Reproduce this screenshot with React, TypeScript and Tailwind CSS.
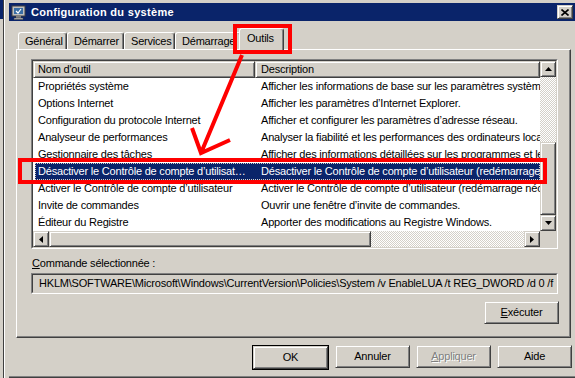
import React from 'react';

// classic 3D edges
const raised =
  'border border-t-[#d4d0c8] border-l-[#d4d0c8] border-r-[#404040] border-b-[#404040] shadow-[inset_1px_1px_#ffffff,inset_-1px_-1px_#808080]';

const tools: [string, string][] = [
  ['Propriétés système', 'Afficher les informations de base sur les paramètres système.'],
  ['Options Internet', 'Afficher les paramètres d’Internet Explorer.'],
  ['Configuration du protocole Internet', 'Afficher et configurer les paramètres d’adresse réseau.'],
  ['Analyseur de performances', 'Analyser la fiabilité et les performances des ordinateurs locaux et distants.'],
  ['Gestionnaire des tâches', 'Afficher des informations détaillées sur les programmes et les processus.'],
  ['Désactiver le Contrôle de compte d’utilisat…', 'Désactiver le Contrôle de compte d’utilisateur (redémarrage nécessaire).'],
  ['Activer le Contrôle de compte d’utilisateur', 'Activer le Contrôle de compte d’utilisateur (redémarrage nécessaire).'],
  ['Invite de commandes', 'Ouvrir une fenêtre d’invite de commandes.'],
  ['Éditeur du Registre', 'Apporter des modifications au Registre Windows.'],
];

const tabs = [
  { label: 'Général', w: 'w-[49px]' },
  { label: 'Démarrer', w: 'w-[57px]' },
  { label: 'Services', w: 'w-[51px]' },
  { label: 'Démarrage', w: 'w-[66px]' },
];

function Arrow({ dir }: { dir: 'up' | 'down' | 'left' | 'right' }) {
  const pts = {
    up: '3.5,0 7,4 0,4',
    down: '0,0 7,0 3.5,4',
    left: '4,0 4,7 0,3.5',
    right: '0,0 4,3.5 0,7',
  }[dir];
  const vertical = dir === 'up' || dir === 'down';
  return (
    <svg width={vertical ? 7 : 4} height={vertical ? 4 : 7} viewBox={vertical ? '0 0 7 4' : '0 0 4 7'}>
      <polygon points={pts} fill="#000" />
    </svg>
  );
}

function ScrollBtn({ dir }: { dir: 'up' | 'down' | 'left' | 'right' }) {
  return (
    <div className={`w-[16px] h-[16px] shrink-0 bg-[#d4d0c8] flex items-center justify-center ${raised}`}>
      <Arrow dir={dir} />
    </div>
  );
}

const hatch = 'bg-[repeating-conic-gradient(#ffffff_0_25%,#d4d0c8_0_50%)] bg-[length:2px_2px]';

function Button({ children, className = '' }: { children: React.ReactNode; className?: string }) {
  return (
    <div className={`w-[75px] h-[23px] bg-[#d4d0c8] flex items-center justify-center ${raised} ${className}`}>
      {children}
    </div>
  );
}

export default function App() {
  return (
    <div className="relative w-[575px] h-[378px] overflow-hidden bg-[#d4d0c8] flex font-['Liberation_Sans',Arial,sans-serif] text-[11px] leading-[13px] tracking-[-0.2px] text-black">
      {/* window behind */}
      <div className="w-[3px] flex flex-col">
        <div className="h-[19px] bg-[#0a246a]" />
        <div className="flex-1 bg-[#d4d0c8]" />
      </div>
      <div className="w-px bg-[#404040]" />

      <div className="flex-1 flex flex-col pt-[3px] pl-[4px] border-l border-white">
        {/* Title bar */}
        <div className="h-[18px] bg-[#0a246a] flex items-center pl-[2px] pr-[2px]">
          <svg width="15" height="15" viewBox="0 0 15 15" className="shrink-0">
            <rect x="1" y="1" width="13" height="10" fill="#c0c0c0" stroke="#404040" />
            <rect x="3" y="3" width="9" height="6" fill="#3a6ea5" />
            <path d="M5 6 l2 2 l3 -4" stroke="#ffffff" strokeWidth="1.2" fill="none" />
            <rect x="5" y="11" width="5" height="2" fill="#808080" />
            <rect x="3" y="13" width="9" height="1.5" fill="#c0c0c0" stroke="#404040" strokeWidth="0.5" />
          </svg>
          <span className="ml-[5px] text-white font-bold tracking-[0.3px] whitespace-nowrap">Configuration du système</span>
          <div className="flex-1" />
          <div className={`w-[16px] h-[14px] bg-[#d4d0c8] flex items-center justify-center ${raised}`}>
            <svg width="8" height="7" viewBox="0 0 8 7">
              <path d="M0.5 0.5 L7.5 6.5 M7.5 0.5 L0.5 6.5" stroke="#000" strokeWidth="1.6" />
            </svg>
          </div>
        </div>

        {/* Tabs */}
        <div className="h-[28px] flex items-end ml-[9px]">
          {tabs.map((t) => (
            <div
              key={t.label}
              className={`${t.w} h-[17px] pl-[6px] flex items-center border-l border-t border-white border-r border-r-[#404040] shadow-[inset_-1px_0_#808080] rounded-t-[3px] whitespace-nowrap`}
            >
              {t.label}
            </div>
          ))}
          <div className="relative z-10 -ml-[2px] -mb-px w-[45px] h-[22px] pl-[7px] pt-[3px] bg-[#d4d0c8] border-l border-t border-white border-r border-r-[#404040] shadow-[inset_-1px_0_#808080] rounded-t-[3px]">
            Outils
          </div>
        </div>

        {/* Panel */}
        <div className="ml-[7px] w-[555px] h-[289px] border border-t-white border-l-white border-r-[#404040] border-b-[#404040] shadow-[inset_-1px_-1px_#808080] pl-[14px] pt-[9px] flex flex-col">
          {/* List view */}
          <div className="w-[527px] h-[190px] border border-t-[#808080] border-l-[#808080] border-r-white border-b-white">
            <div className="w-full h-full border border-t-[#404040] border-l-[#404040] border-r-[#d4d0c8] border-b-[#d4d0c8] bg-white flex flex-col">
              <div className="flex h-[170px]">
                <div className="w-[507px] overflow-hidden">
                  <div className="flex h-[17px] bg-[#d4d0c8]">
                    <div className={`w-[222px] shrink-0 pl-[4px] flex items-center ${raised}`}>Nom d'outil</div>
                    <div className={`flex-1 pl-[5px] flex items-center ${raised}`}>Description</div>
                  </div>
                  {tools.map(([name, desc], i) => {
                    const sel = i === 5;
                    return (
                      <div
                        key={name}
                        className={`flex h-[17px] items-center whitespace-nowrap ${
                          sel ? 'bg-[#0a246a] text-white outline-1 outline-dotted outline-[#d4d0c8] -outline-offset-1 ml-[2px]' : ''
                        }`}
                      >
                        <div className={`${sel ? 'w-[220px] pl-[3px]' : 'w-[222px] pl-[5px]'} shrink-0 pr-[4px] truncate`}>{name}</div>
                        <div className="pl-[6px]">{desc}</div>
                      </div>
                    );
                  })}
                </div>
                {/* vertical scrollbar */}
                <div className="w-[16px] flex flex-col">
                  <ScrollBtn dir="up" />
                  <div className={`h-[65px] ${hatch}`} />
                  <div className={`h-[73px] bg-[#d4d0c8] ${raised}`} />
                  <ScrollBtn dir="down" />
                </div>
              </div>
              {/* horizontal scrollbar */}
              <div className="flex h-[16px]">
                <ScrollBtn dir="left" />
                <div className={`w-[322px] bg-[#d4d0c8] ${raised}`} />
                <div className={`w-[153px] ${hatch}`} />
                <ScrollBtn dir="right" />
                <div className="flex-1 bg-[#d4d0c8]" />
              </div>
            </div>
          </div>

          <div className="mt-[8px] pl-px">
            <span className="underline">C</span>ommande sélectionnée :
          </div>
          <div className="mt-[3px] w-[527px] h-[21px] border border-t-[#808080] border-l-[#808080] border-r-white border-b-white">
            <div className="w-full h-full border border-t-[#404040] border-l-[#404040] border-r-[#d4d0c8] border-b-[#d4d0c8] flex items-center pl-[6px] overflow-hidden whitespace-nowrap">
              HKLM\SOFTWARE\Microsoft\Windows\CurrentVersion\Policies\System /v EnableLUA /t REG_DWORD /d 0 /f
            </div>
          </div>
          <div className="mt-[7px] ml-[453px]">
            <Button className="w-[65px]">
              <span>
                <span className="underline">E</span>xécuter
              </span>
            </Button>
          </div>
        </div>

        {/* Dialog buttons */}
        <div className="mt-[7px] flex justify-end gap-[6px] pr-[3px]">
          <div className="border border-black">
            <Button className="w-[73px] h-[21px]">OK</Button>
          </div>
          <Button>Annuler</Button>
          <Button className="text-[#808080] [text-shadow:1px_1px_#ffffff]">
            <span>
              <span className="underline">A</span>ppliquer
            </span>
          </Button>
          <Button>Aide</Button>
        </div>
        <div className="flex-1" />
        <div className="h-px bg-[#808080]" />
        <div className="h-px bg-[#404040]" />
      </div>

      {/* annotations */}
      <div className="absolute left-[233px] top-[24px] w-[59px] h-[30px] border-4 border-[#ff0000]" />
      <div className="absolute left-[18px] top-[158px] w-[529px] h-[26px] border-4 border-[#ff0000]" />
      <svg className="absolute left-0 top-0 pointer-events-none" width="575" height="378" viewBox="0 0 575 378">
        <path d="M242 55 L201 153 M192 128 L201 153 L230 140" stroke="#ff0000" strokeWidth="4" fill="none" strokeLinejoin="miter" />
      </svg>
    </div>
  );
}
